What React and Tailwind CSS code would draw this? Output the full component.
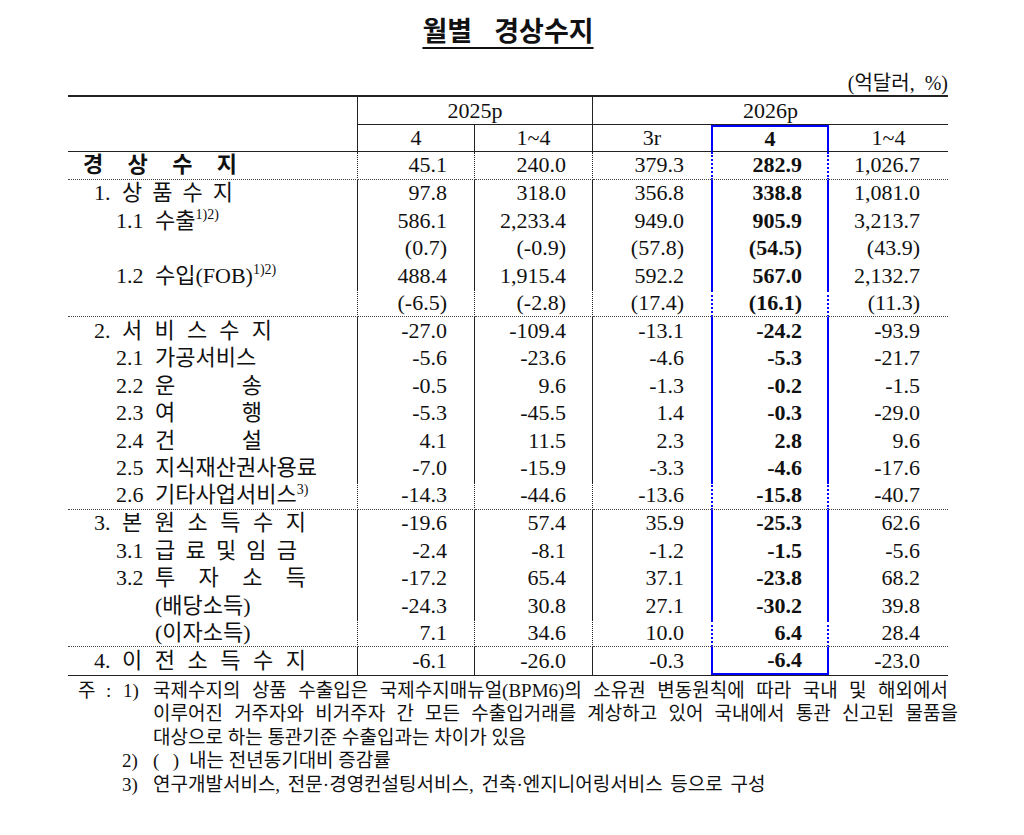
import React from 'react';

const BLUE = 'border-[#0000ff]';

function Spread({ t, w }) {
  return (
    <span className={`inline-flex justify-between ${w}`}>
      {t.split('').map((c, i) => (
        <span key={i}>{c}</span>
      ))}
    </span>
  );
}

function Main({ n, t, w }) {
  return (
    <div className="flex pl-[26px]">
      <span className="w-[28px]">{n}</span>
      <Spread t={t} w={w} />
    </div>
  );
}

function Sub({ n, children }) {
  return (
    <div className="flex pl-[48px] whitespace-nowrap">
      <span className="w-[39px] shrink-0">{n}</span>
      <span>{children}</span>
    </div>
  );
}

const Sup = ({ children }) => <sup className="text-[14px] -top-[0.6em]">{children}</sup>;

const rows = [
  {
    label: (
      <div className="pl-[15px] font-bold">
        <Spread t="경상수지" w="w-[154px]" />
      </div>
    ),
    v: ['45.1', '240.0', '379.3', '282.9', '1,026.7'],
    dot: true,
  },
  { label: <Main n="1." t="상품수지" w="w-[111px]" />, v: ['97.8', '318.0', '356.8', '338.8', '1,081.0'] },
  {
    label: (
      <Sub n="1.1">
        수출<Sup>1)2)</Sup>
      </Sub>
    ),
    v: ['586.1', '2,233.4', '949.0', '905.9', '3,213.7'],
  },
  { label: null, v: ['(0.7)', '(-0.9)', '(57.8)', '(54.5)', '(43.9)'] },
  {
    label: (
      <Sub n="1.2">
        수입(FOB)<Sup>1)2)</Sup>
      </Sub>
    ),
    v: ['488.4', '1,915.4', '592.2', '567.0', '2,132.7'],
  },
  { label: null, v: ['(-6.5)', '(-2.8)', '(17.4)', '(16.1)', '(11.3)'], dot: true },
  { label: <Main n="2." t="서비스수지" w="w-[150px]" />, v: ['-27.0', '-109.4', '-13.1', '-24.2', '-93.9'] },
  { label: <Sub n="2.1">가공서비스</Sub>, v: ['-5.6', '-23.6', '-4.6', '-5.3', '-21.7'] },
  {
    label: (
      <Sub n="2.2">
        <Spread t="운송" w="w-[107px]" />
      </Sub>
    ),
    v: ['-0.5', '9.6', '-1.3', '-0.2', '-1.5'],
  },
  {
    label: (
      <Sub n="2.3">
        <Spread t="여행" w="w-[107px]" />
      </Sub>
    ),
    v: ['-5.3', '-45.5', '1.4', '-0.3', '-29.0'],
  },
  {
    label: (
      <Sub n="2.4">
        <Spread t="건설" w="w-[107px]" />
      </Sub>
    ),
    v: ['4.1', '11.5', '2.3', '2.8', '9.6'],
  },
  { label: <Sub n="2.5">지식재산권사용료</Sub>, v: ['-7.0', '-15.9', '-3.3', '-4.6', '-17.6'] },
  {
    label: (
      <Sub n="2.6">
        기타사업서비스<Sup>3)</Sup>
      </Sub>
    ),
    v: ['-14.3', '-44.6', '-13.6', '-15.8', '-40.7'],
    dot: true,
  },
  { label: <Main n="3." t="본원소득수지" w="w-[184px]" />, v: ['-19.6', '57.4', '35.9', '-25.3', '62.6'] },
  {
    label: (
      <Sub n="3.1">
        <Spread t="급료및임금" w="w-[142px]" />
      </Sub>
    ),
    v: ['-2.4', '-8.1', '-1.2', '-1.5', '-5.6'],
  },
  {
    label: (
      <Sub n="3.2">
        <Spread t="투자소득" w="w-[151px]" />
      </Sub>
    ),
    v: ['-17.2', '65.4', '37.1', '-23.8', '68.2'],
  },
  { label: <Sub n="">(배당소득)</Sub>, v: ['-24.3', '30.8', '27.1', '-30.2', '39.8'] },
  { label: <Sub n="">(이자소득)</Sub>, v: ['7.1', '34.6', '10.0', '6.4', '28.4'], dot: true },
  { label: <Main n="4." t="이전소득수지" w="w-[184px]" />, v: ['-6.1', '-26.0', '-0.3', '-6.4', '-23.0'] },
];

// per-column cell classes (right aligned numbers)
const colCls = [
  'pr-[27px] border-r border-r-[#222]',
  'pr-[26px] border-r border-r-[#222]',
  'pr-[27px]',
  `pr-[25px] border-x-2 ${BLUE} font-bold`,
  'pr-[28px]',
];

export default function App() {
  return (
    <div className="w-[1024px] h-[835px] bg-white text-[#111] font-['Liberation_Serif','Noto_Sans_CJK_KR',serif]">
      <div className="ml-[68px] w-[880px]">
        <h1 className="pt-[15px] text-center font-['Noto_Sans_CJK_KR',sans-serif] text-[27px] leading-[30px] font-bold">
          <span className="underline underline-offset-[6px] decoration-[1.5px] [word-spacing:16px]">월별 경상수지</span>
        </h1>

        <div className="mt-[27px] text-right text-[20px] leading-[22px] whitespace-pre">(억달러,  %)</div>

        <table className="mt-[1px] w-[880px] table-fixed border-separate border-spacing-0 border-t-2 border-b-[1.5px] border-[#222] text-[22px] leading-[22px]">
          <colgroup>
            <col className="w-[290px]" />
            <col className="w-[117px]" />
            <col className="w-[118px]" />
            <col className="w-[118px]" />
            <col className="w-[118px]" />
            <col className="w-[119px]" />
          </colgroup>
          <thead>
            <tr className="h-[28px]">
              <th rowSpan={2} className="border-r border-b border-[#222]" />
              <th colSpan={2} className="font-normal border-r border-b border-[#222]">
                2025p
              </th>
              <th colSpan={3} className="font-normal border-b border-[#222]">
                2026p
              </th>
            </tr>
            <tr className="h-[27px]">
              <th className="font-normal border-r border-b border-[#222]">4</th>
              <th className="font-normal border-r border-b border-[#222]">1~4</th>
              <th className="font-normal border-b border-[#222]">3r</th>
              <th className={`font-bold border-x-2 border-t-2 ${BLUE} border-b border-b-[#222]`}>4</th>
              <th className="font-normal border-b border-[#222]">1~4</th>
            </tr>
          </thead>
          <tbody>
            {rows.map((r, i) => {
              const last = i === rows.length - 1;
              const dot = r.dot ? 'border-b border-dotted border-b-[#444]' : '';
              return (
                <tr key={i} className="h-[27.5px]">
                  <td className={`p-0 border-r border-r-[#222] ${dot}`}>{r.label}</td>
                  {r.v.map((v, j) => (
                    <td
                      key={j}
                      className={`p-0 text-right ${colCls[j]} ${
                        j === 3 && last ? 'border-b-2 border-b-[#0000ff]' : dot
                      }`}
                    >
                      {v}
                    </td>
                  ))}
                </tr>
              );
            })}
          </tbody>
        </table>

        <div className="mt-[3px] text-[19px] leading-[23.5px] whitespace-nowrap">
          <div className="flex">
            <div className="w-[85px] shrink-0 flex pl-[10px]">
              <span className="w-[28px]">주</span>
              <span className="w-[17px]">:</span>
              <span>1)</span>
            </div>
            <div className="w-[795px] shrink-0">
              <div className="text-justify [text-align-last:justify]">
                국제수지의 상품 수출입은 국제수지매뉴얼(BPM6)의 소유권 변동원칙에 따라 국내 및 해외에서
              </div>
              <div className="w-[805px] text-justify [text-align-last:justify]">
                이루어진 거주자와 비거주자 간 모든 수출입거래를 계상하고 있어 국내에서 통관 신고된 물품을
              </div>
              <div className="text-left">대상으로 하는 통관기준 수출입과는 차이가 있음</div>
            </div>
          </div>
          <div className="flex pl-[54px]">
            <span className="w-[31px] shrink-0">2)</span>
            <span className="w-[26px] shrink-0 flex justify-between">
              <span>(</span>
              <span>)</span>
            </span>
            <span className="ml-[10px]">내는 전년동기대비 증감률</span>
          </div>
          <div className="flex pl-[54px]">
            <span className="w-[31px] shrink-0">3)</span>
            <span className="[word-spacing:3px]">
              연구개발서비스, 전문·경영컨설팅서비스, 건축·엔지니어링서비스 등으로 구성
            </span>
          </div>
        </div>
      </div>
    </div>
  );
}
